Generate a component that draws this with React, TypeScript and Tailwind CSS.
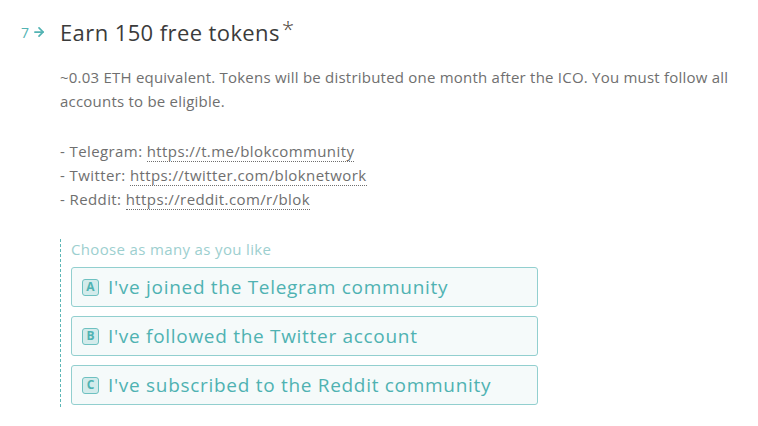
import { ArrowRight } from 'lucide-react';

const choices = [
  { key: 'A', label: "I've joined the Telegram community" },
  { key: 'B', label: "I've followed the Twitter account" },
  { key: 'C', label: "I've subscribed to the Reddit community" },
];

const links = [
  { name: 'Telegram', href: 'https://t.me/blokcommunity' },
  { name: 'Twitter', href: 'https://twitter.com/bloknetwork' },
  { name: 'Reddit', href: 'https://reddit.com/r/blok' },
];

export default function App() {
  return (
    <div className="min-h-[426px] w-[758px] bg-white font-['Open_Sans',sans-serif]">
      <div className="flex pt-[15px] pl-[21px]">
        <div className="flex h-[34px] w-[39px] shrink-0 items-center gap-[3px] text-[14px] text-[#52b3b3]">
          <span>7</span>
          <ArrowRight size={14} strokeWidth={3} />
        </div>

        <div className="w-[676px]">
          <h1 className="relative h-[34px] text-[22px] leading-[34px] tracking-[0.4px] text-[#3b3b3b]">
            Earn 150 free tokens
            <span className="absolute top-[-4px] ml-[2px] text-[22px] font-light text-[#4a4036]">*</span>
          </h1>

          <div className="mt-[16px] text-[15px] leading-[24px] tracking-[0.22px] text-[#6f6f6f]">
            <p>
              ~0.03 ETH equivalent. Tokens will be distributed one month after the ICO. You must follow all
              accounts to be eligible.
            </p>
            <p className="mt-[26px] tracking-[0.4px]">
              {links.map((l) => (
                <span key={l.name} className="block">
                  - {l.name}:{' '}
                  <a href={l.href} className="border-b border-dotted border-[#6f6f6f] text-[#6f6f6f]">
                    {l.href}
                  </a>
                </span>
              ))}
            </p>
          </div>

          <div className="mt-[28px] w-[478px] border-l border-dashed border-[#5db6b6] pb-[2px] pl-[10px]">
            <div className="text-[15px] leading-[20px] tracking-[0.35px] text-[#9dcfcf]">Choose as many as you like</div>
            <div className="mt-[8px] flex flex-col gap-[9px]">
              {choices.map((c) => (
                <div
                  key={c.key}
                  className="flex h-[40px] items-center gap-[9px] rounded-[3px] border border-[#92cfcf] bg-[#f5fafa] px-[10px] text-[19px] tracking-[0.7px] text-[#4fb2b2]"
                >
                  <span className="flex h-[17px] w-[17px] items-center justify-center rounded-[3px] border border-[#6ec1c1] bg-[#d3ebeb] text-[12px] font-bold tracking-normal text-[#4fb2b2]">
                    {c.key}
                  </span>
                  <span>{c.label}</span>
                </div>
              ))}
            </div>
          </div>
        </div>
      </div>
    </div>
  );
}
